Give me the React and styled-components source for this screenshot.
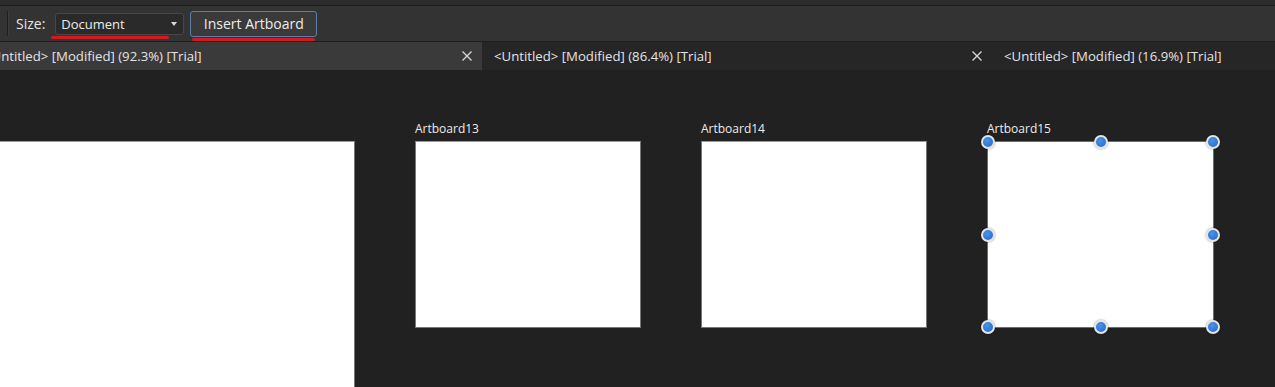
import React from "react"
import styled, { createGlobalStyle, css } from "styled-components"

const Global = createGlobalStyle`
  html, body {
    margin: 0;
    padding: 0;
    background: #212121;
    overflow: hidden;
  }
  body {
    font-family: "Open Sans", "Noto Sans", "Liberation Sans", sans-serif;
    color: #e8e8e8;
  }
`

const Window = styled.div`
  width: 1275px;
  height: 387px;
  display: flex;
  flex-direction: column;
  overflow: hidden;
  background: #212121;
`

const TopStrip = styled.div`
  height: 5px;
  background: #2c2c2c;
  border-bottom: 1px solid #1b1b1b;
  flex-shrink: 0;
`

const Toolbar = styled.div`
  height: 35px;
  background: #333333;
  display: flex;
  align-items: center;
  padding-left: 7px;
  border-bottom: 1px solid #1f1f1f;
  flex-shrink: 0;
`

const Separator = styled.div`
  width: 1px;
  height: 25px;
  background: #1e1e1e;
  border-right: 1px solid #3c3c3c;
  margin-right: 7px;
`

const Label = styled.span`
  font-size: 14px;
  color: #e6e6e6;
  margin-right: 10px;
`

const underline = css`
  &::after {
    content: "";
    position: absolute;
    top: calc(100% + 2px);
    height: 3px;
    border-radius: 2px;
    background: #d31a1f;
  }
`

const Dropdown = styled.div`
  position: relative;
  width: 122px;
  height: 20px;
  box-sizing: content-box;
  background: #2a2a2a;
  border: 1px solid #474747;
  border-radius: 3px;
  display: flex;
  align-items: center;
  padding: 0 0 0 5px;
  font-size: 13px;
  color: #ececec;
  margin-right: 6px;
  ${underline}
  &::after {
    left: -5px;
    width: 118px;
  }
`

const Caret = styled.span`
  margin-left: auto;
  margin-right: 6px;
  width: 0;
  height: 0;
  border-left: 3.5px solid transparent;
  border-right: 3.5px solid transparent;
  border-top: 4px solid #d8d8d8;
`

const Button = styled.div`
  position: relative;
  width: 125px;
  height: 24px;
  box-sizing: content-box;
  background: #3a3a3a;
  border: 1px solid #5c7ea6;
  border-radius: 3px;
  display: flex;
  align-items: center;
  justify-content: center;
  font-size: 14px;
  color: #ececec;
  ${underline}
  &::after {
    left: 1px;
    width: 123px;
  }
`

const TabBar = styled.div`
  height: 28px;
  background: #262626;
  display: flex;
  flex-shrink: 0;
  white-space: nowrap;
`

const Tab = styled.div`
  width: 510px;
  flex-shrink: 0;
  display: flex;
  align-items: center;
  padding: 0 10px 0 12px;
  box-sizing: border-box;
  font-size: 13.2px;
  color: #e4e4e4;
  background: ${p => (p.$active ? "#3a3a3a" : "transparent")};
  &:first-child {
    margin-left: -28px;
  }
`

const TabTitle = styled.span`
  flex: 1;
  overflow: hidden;
`

const CloseIcon = () => (
  <svg width="10" height="10" viewBox="0 0 10 10">
    <path d="M0.5 0.5 L9.5 9.5 M9.5 0.5 L0.5 9.5" stroke="#d6d6d6" strokeWidth="1.4" />
  </svg>
)

const Canvas = styled.div`
  flex: 1;
  display: flex;
  align-items: flex-start;
  gap: 60px;
  padding-top: 51px;
`

const Board = styled.div`
  display: flex;
  flex-direction: column;
  flex-shrink: 0;
  margin-left: ${p => p.$offset || 0}px;
`

const BoardLabel = styled.div`
  font-size: 12px;
  line-height: 16px;
  height: 16px;
  margin-bottom: 4px;
  color: #ececec;
`

const Sheet = styled.div`
  position: relative;
  width: ${p => p.$w}px;
  height: ${p => p.$h}px;
  background: #ffffff;
  border: 1px solid #777777;
  border-top-color: #9a9a9a;
  box-sizing: border-box;
  ${p =>
    p.$selected &&
    css`
      border: 1.5px solid #2f78d4;
    `}
`

const Handle = styled.span`
  position: absolute;
  width: 10px;
  height: 10px;
  border-radius: 50%;
  background: radial-gradient(circle at 40% 35%, #4a93ea, #1f66c6);
  border: 2px solid #e4e4e4;
  box-shadow: 0 0 2px rgba(0, 0, 0, 0.5);
  transform: translate(-50%, -50%);
`

const handles = [
  [0, 0], [50, 0], [100, 0],
  [0, 50], [100, 50],
  [0, 100], [50, 100], [100, 100],
]

const tabs = [
  { title: "<Untitled> [Modified] (92.3%) [Trial]", active: true },
  { title: "<Untitled> [Modified] (86.4%) [Trial]" },
  { title: "<Untitled> [Modified] (16.9%) [Trial]" },
]

const boards = [
  { name: "", w: 500, h: 400, offset: -145 },
  { name: "Artboard13", w: 226, h: 187 },
  { name: "Artboard14", w: 226, h: 187 },
  { name: "Artboard15", w: 227, h: 187, selected: true },
]

export default function App() {
  return (
    <Window>
      <Global />
      <TopStrip />
      <Toolbar>
        <Separator />
        <Label>Size:</Label>
        <Dropdown>
          Document
          <Caret />
        </Dropdown>
        <Button>Insert Artboard</Button>
      </Toolbar>
      <TabBar>
        {tabs.map((t, i) => (
          <Tab key={i} $active={t.active}>
            <TabTitle>{t.title}</TabTitle>
            {i < 2 && <CloseIcon />}
          </Tab>
        ))}
      </TabBar>
      <Canvas>
        {boards.map((b, i) => (
          <Board key={i} $offset={b.offset}>
            <BoardLabel>{b.name}</BoardLabel>
            <Sheet $w={b.w} $h={b.h} $selected={b.selected}>
              {b.selected &&
                handles.map(([x, y], j) => (
                  <Handle key={j} style={{ left: `${x}%`, top: `${y}%` }} />
                ))}
            </Sheet>
          </Board>
        ))}
      </Canvas>
    </Window>
  )
}
